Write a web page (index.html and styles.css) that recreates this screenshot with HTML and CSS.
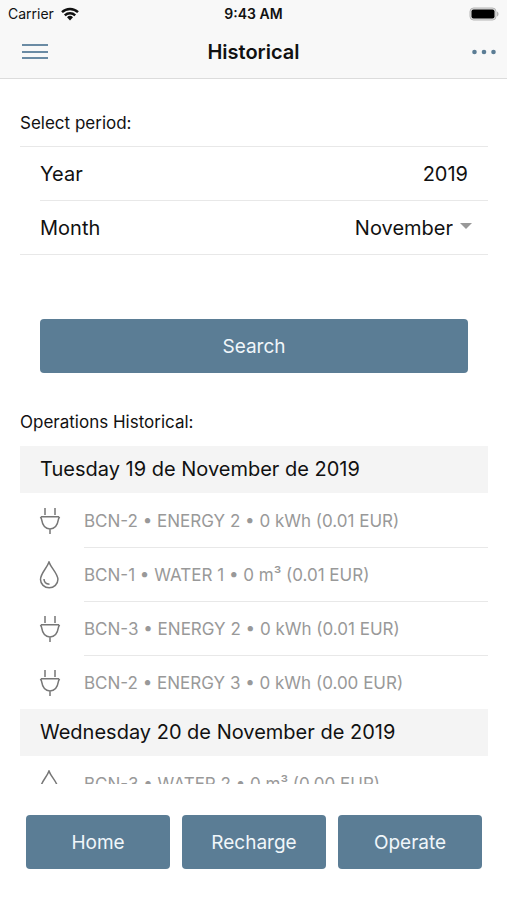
FILE: index.html
```html
<!DOCTYPE html>
<html lang="en">
<head>
<meta charset="utf-8">
<meta name="viewport" content="width=device-width, initial-scale=1">
<title>Historical</title>
<link rel="stylesheet" href="styles.css">
</head>
<body>
<svg class="sprite" aria-hidden="true">
  <symbol id="plug" viewBox="0 0 22 28">
    <path d="M6 1v7M16 1v7M2 9.700h18M1.500 9.700c.3 1 .8 1.500 1 2.500C3.500 18.500 6.500 22 11 22s7.500-3.500 8.500-9.800c.2-1 .7-1.500 1-2.500M11 22v5"/>
  </symbol>
  <symbol id="drop" viewBox="0 0 22 28">
    <path d="M10 1C8 7 1.500 12.500 1.500 18.500a8.700 8.300 0 0 0 17.400 0C18.900 12.500 12 7 10 1zM5 18c0 3 2 5 5.500 5.200"/>
  </symbol>
</svg>

<header class="top">
  <div class="status">
    <span class="carrier">Carrier
      <svg class="wifi" viewBox="0 0 18 14" aria-hidden="true">
        <path d="M1 5.200a11.500 11.500 0 0 1 16 0M3.800 8.300a7.500 7.500 0 0 1 10.400 0"/>
        <path class="solid" d="M9 13.500l-3-3.200a4.300 4.300 0 0 1 6 0z"/>
      </svg>
    </span>
    <span class="clock">9:43 AM</span>
    <svg class="battery" viewBox="0 0 30 14" aria-hidden="true">
      <rect class="shell" x="1" y="1" width="26" height="12" rx="3.500"/>
      <rect x="2.500" y="2.500" width="23" height="9" rx="2"/>
      <path class="tip" d="M28 4.500c2 .8 2 4.200 0 5z"/>
    </svg>
  </div>
  <div class="nav">
    <button class="icon-button" type="button" aria-label="Menu">
      <svg class="menu" viewBox="0 0 26 18"><path d="M0 2h26M0 9h26M0 15h26"/></svg>
    </button>
    <h1 class="title">Historical</h1>
    <button class="icon-button icon-button-end" type="button" aria-label="More">
      <svg class="more" viewBox="0 0 26 18"><circle cx="3.500" cy="9" r="2.300"/><circle cx="13" cy="9" r="2.300"/><circle cx="22.500" cy="9" r="2.300"/></svg>
    </button>
  </div>
</header>

<main class="content">
  <form class="period">
    <h2 class="section-label">Select period:</h2>
    <div class="fields">
      <div class="field">
        <label for="year">Year</label>
        <input id="year" type="text" inputmode="numeric" value="2019">
      </div>
      <div class="field">
        <label for="month">Month</label>
        <select id="month">
          <option>January</option><option>February</option><option>March</option><option>April</option>
          <option>May</option><option>June</option><option>July</option><option>August</option>
          <option>September</option><option>October</option><option selected>November</option><option>December</option>
        </select>
        <svg class="caret" viewBox="0 0 12 6" aria-hidden="true"><path d="M0 0h12L6 6z"/></svg>
      </div>
    </div>
    <button class="button search" type="button">Search</button>
  </form>

  <h2 class="section-label">Operations Historical:</h2>
  <div class="history">
    <h3 class="day">Tuesday 19 de November de 2019</h3>
    <ul class="operations">
      <li class="operation"><svg class="kind"><use href="#plug"/></svg><span class="detail">BCN-2 • ENERGY 2 • 0 kWh (0.01 EUR)</span></li>
      <li class="operation"><svg class="kind"><use href="#drop"/></svg><span class="detail">BCN-1 • WATER 1 • 0 m³ (0.01 EUR)</span></li>
      <li class="operation"><svg class="kind"><use href="#plug"/></svg><span class="detail">BCN-3 • ENERGY 2 • 0 kWh (0.01 EUR)</span></li>
      <li class="operation"><svg class="kind"><use href="#plug"/></svg><span class="detail">BCN-2 • ENERGY 3 • 0 kWh (0.00 EUR)</span></li>
    </ul>
    <h3 class="day">Wednesday 20 de November de 2019</h3>
    <ul class="operations">
      <li class="operation"><svg class="kind"><use href="#drop"/></svg><span class="detail">BCN-3 • WATER 2 • 0 m³ (0.00 EUR)</span></li>
    </ul>
  </div>
</main>

<nav class="actions">
  <button class="button" type="button">Home</button>
  <button class="button" type="button">Recharge</button>
  <button class="button" type="button">Operate</button>
</nav>
</body>
</html>
```
FILE: styles.css
```css
* {
  box-sizing: border-box;
}

body {
  display: flex;
  flex-direction: column;
  height: 100vh;
  margin: 0;
  background: #fff;
  color: #111;
  font-family: Inter, "Liberation Sans", sans-serif;
  font-size: 20px;
  line-height: 24px;
}

h1, h2, h3, ul {
  margin: 0;
  padding: 0;
  font-weight: 400;
}

button, input, select {
  font: inherit;
  color: inherit;
}

.sprite {
  display: none;
}

.top {
  flex: none;
  background: #f8f8f8;
  border-bottom: 1px solid #dcdcdc;
}

.status {
  display: grid;
  grid-template-columns: 1fr auto 1fr;
  align-items: center;
  height: 28px;
  padding: 0 8px;
  font-size: 14px;
}

.carrier {
  display: flex;
  align-items: center;
  gap: 7px;
}

.wifi {
  width: 18px;
  height: 14px;
  fill: none;
  stroke: #111;
  stroke-width: 2.4;
}

.wifi .solid {
  fill: #111;
  stroke: none;
}

.clock {
  font-weight: 600;
}

.battery {
  justify-self: end;
  width: 30px;
  height: 14px;
}

.battery .shell {
  fill: #ddd;
  stroke: #b5b5b5;
}

.battery .tip {
  fill: #b5b5b5;
}

.nav {
  display: grid;
  grid-template-columns: 1fr auto 1fr;
  align-items: center;
  height: 50px;
  padding: 0 10px 2px;
}

.icon-button {
  display: flex;
  justify-self: start;
  padding: 0 12px;
  border: 0;
  background: none;
}

.icon-button-end {
  justify-self: end;
  padding-right: 0;
}

.menu, .more {
  width: 26px;
  height: 18px;
}

.menu {
  stroke: #6a8ba4;
  stroke-width: 2;
}

.more {
  fill: #5b7d95;
}

.title {
  font-size: 20px;
  font-weight: 600;
}

.content {
  flex: 1;
  display: flex;
  flex-direction: column;
  min-height: 0;
  padding: 32px 19px 0 20px;
}

.section-label {
  flex: none;
  font-size: 17px;
}

.fields {
  margin-top: 11px;
  border: solid #e8e8e8;
  border-width: 1px 0;
}

.field {
  display: flex;
  align-items: center;
  box-sizing: content-box;
  height: 53px;
  margin-left: 20px;
  padding-right: 20px;
}

.field + .field {
  padding-right: 16px;
  border-top: 1px solid #e8e8e8;
}

.field input {
  flex: 1;
  min-width: 0;
  padding: 0;
  border: 0;
  background: none;
  text-align: right;
}

.field select {
  flex: 1;
  min-width: 0;
  padding: 0;
  border: 0;
  background: none;
  appearance: none;
  text-align: right;
  text-align-last: right;
}

.caret {
  width: 12px;
  height: 6px;
  margin: 0 0 4px 7px;
  fill: #999;
}

.button {
  height: 54px;
  padding: 2px 0 0;
  border: 0;
  border-radius: 4px;
  background: #5b7d95;
  color: #f0f6fa;
  font-size: 19px;
}

.search {
  display: block;
  width: calc(100% - 40px);
  margin: 64px 20px 37px;
}

.history {
  flex: 1;
  min-height: 0;
  margin-top: 12px;
  overflow-y: auto;
  scrollbar-width: none;
}

.day {
  height: 47px;
  padding: 11px 20px;
  background: #f4f4f4;
  font-size: 20px;
}

.operations {
  list-style: none;
}

.operation {
  display: flex;
  gap: 23px;
  height: 54px;
  padding-left: 19px;
}

.kind {
  width: 22px;
  height: 28px;
  margin-top: 14px;
  fill: none;
  stroke: #777;
  stroke-width: 1.5;
}

.detail {
  flex: 1;
  padding-top: 16px;
  color: #999;
  font-size: 17px;
}

.operation + .operation .detail {
  padding-top: 15px;
  border-top: 1px solid #e8e8e8;
}

.actions {
  flex: none;
  display: grid;
  grid-template-columns: repeat(3, 1fr);
  gap: 12px;
  padding: 31px 25px 31px 26px;
}
```
